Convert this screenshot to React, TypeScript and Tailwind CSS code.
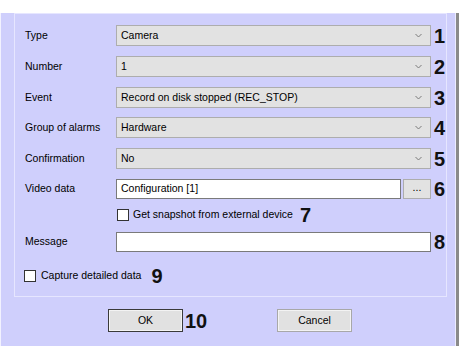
import React from "react";

function Chevron() {
  return (
    <svg width="7" height="5" viewBox="0 0 7 5" className="shrink-0">
      <polyline points="0.5,1 3.5,4 6.5,1" fill="none" stroke="#7a7a7a" strokeWidth="1" />
    </svg>
  );
}

function Num({ n, className = "" }: { n: string; className?: string }) {
  return (
    <span className={`text-[20px] font-bold leading-none text-[#111] ${className}`}>{n}</span>
  );
}

function SelectRow({ label, value, n, mt }: { label: string; value: string; n: string; mt: string }) {
  return (
    <div className={`flex h-[21px] items-center ${mt}`}>
      <span className="w-[91px] shrink-0">{label}</span>
      <div className="flex h-[21px] w-[315px] shrink-0 items-center justify-between border border-[#adadad] bg-[#e2e2e2] pl-[4px] pr-[8px]">
        <span>{value}</span>
        <Chevron />
      </div>
      <Num n={n} className="ml-[3px]" />
    </div>
  );
}

function Checkbox() {
  return <span className="h-[12px] w-[12px] shrink-0 border border-[#333] bg-white" />;
}

export default function App() {
  return (
    <div className="h-[346px] w-[459px] border-b-[3px] border-l border-r-[3px] border-b-[#8a8a8a] border-l-[#f2f2ff] border-r-[#8a8a8a] bg-[#cfcffc] font-['Liberation_Sans',Arial,sans-serif] text-[10.5px] text-black">
      <div className="h-full w-full border-b border-r border-[#ececff]">
        <div className="ml-[13px] mt-[13px] h-[284px] w-[433px] border border-[#e6e6ff] pl-[10px] pt-[11px]">
          <SelectRow label="Type" value="Camera" n="1" mt="" />
          <SelectRow label="Number" value="1" n="2" mt="mt-[10px]" />
          <SelectRow label="Event" value="Record on disk stopped (REC_STOP)" n="3" mt="mt-[10px]" />
          <SelectRow label="Group of alarms" value="Hardware" n="4" mt="mt-[9px]" />
          <SelectRow label="Confirmation" value="No" n="5" mt="mt-[10px]" />

          <div className="mt-[10px] flex h-[20px] items-center">
            <span className="w-[91px] shrink-0">Video data</span>
            <div className="flex h-[20px] w-[285px] shrink-0 items-center border border-[#7a7a7a] bg-white pl-[4px]">
              Configuration [1]
            </div>
            <div className="ml-[2px] flex h-[20px] w-[28px] shrink-0 items-center justify-center border border-[#adadad] bg-[#e2e2e2] pb-[3px]">
              ...
            </div>
            <Num n="6" className="ml-[3px]" />
          </div>

          <div className="mt-[6px] flex h-[20px] items-center pl-[92px]">
            <Checkbox />
            <span className="ml-[4px]">Get snapshot from external device</span>
            <Num n="7" className="ml-[7px]" />
          </div>

          <div className="mt-[7px] flex h-[20px] items-center">
            <span className="w-[91px] shrink-0">Message</span>
            <div className="h-[20px] w-[315px] shrink-0 border border-[#7a7a7a] bg-white" />
            <Num n="8" className="ml-[3px]" />
          </div>

          <div className="-ml-[1px] mt-[14px] flex h-[20px] items-center">
            <Checkbox />
            <span className="ml-[5px]">Capture detailed data</span>
            <Num n="9" className="ml-[10px]" />
          </div>
        </div>

        <div className="mt-[12px] flex items-center pl-[107px]">
          <div className="flex w-[169px] items-center">
            <button className="h-[23px] w-[75px] border border-[#3a3a3a] bg-[#e1e1e1] shadow-[inset_0_0_0_1px_#f3f3f3]">
              OK
            </button>
            <Num n="10" className="ml-[2px]" />
          </div>
          <button className="h-[23px] w-[75px] border border-[#a8a8a8] bg-[#e1e1e1] shadow-[inset_0_0_0_1px_#f3f3f3]">
            Cancel
          </button>
        </div>
      </div>
    </div>
  );
}
